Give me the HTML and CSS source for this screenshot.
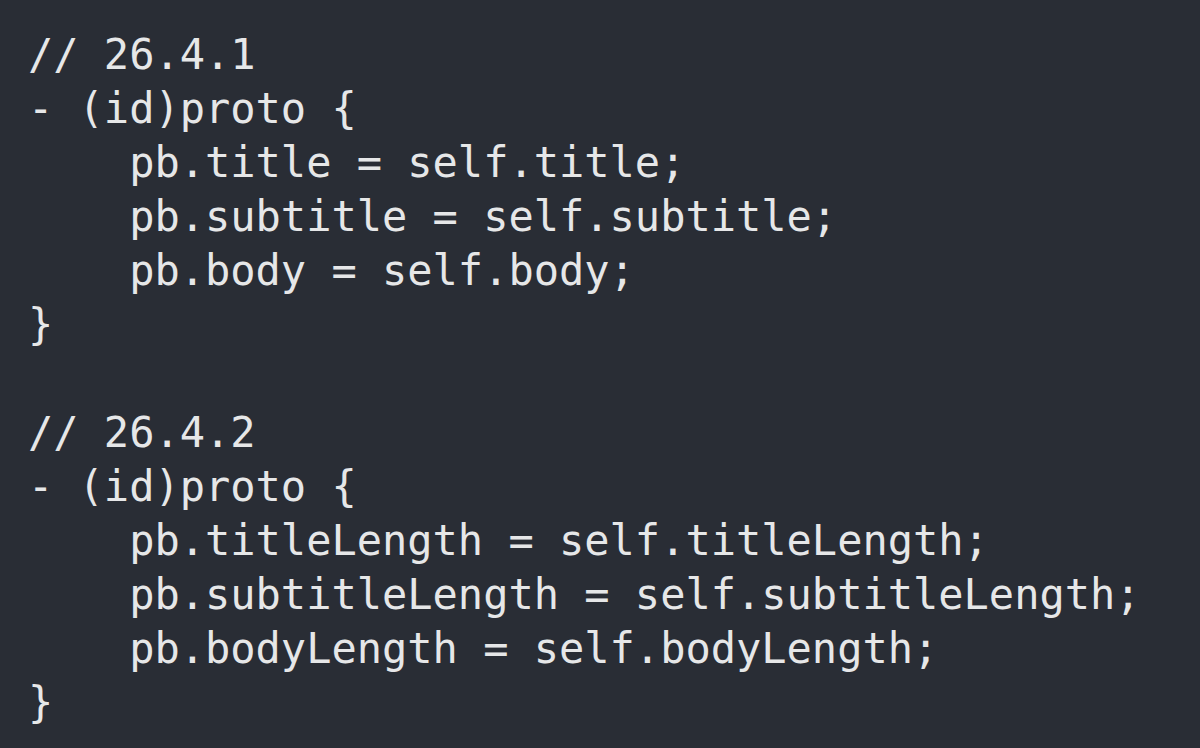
FILE: index.html
```html
<!DOCTYPE html>
<html>
<head>
<meta charset="utf-8">
<link rel="stylesheet" href="styles.css">
</head>
<body>
<pre class="code">// 26.4.1
- (id)proto {
    pb.title = self.title;
    pb.subtitle = self.subtitle;
    pb.body = self.body;
}

// 26.4.2
- (id)proto {
    pb.titleLength = self.titleLength;
    pb.subtitleLength = self.subtitleLength;
    pb.bodyLength = self.bodyLength;
}</pre>
</body>
</html>
```
FILE: styles.css
```css
html, body {
  margin: 0;
  padding: 0;
  background: #292d35;
  width: 1200px;
  height: 748px;
  overflow: hidden;
}
.code {
  margin: 0;
  padding: 28px 0 0 28px;
  font-family: "DejaVu Sans Mono", "Liberation Mono", monospace;
  font-size: 42px;
  line-height: 54px;
  color: #e6e7e8;
}
```
